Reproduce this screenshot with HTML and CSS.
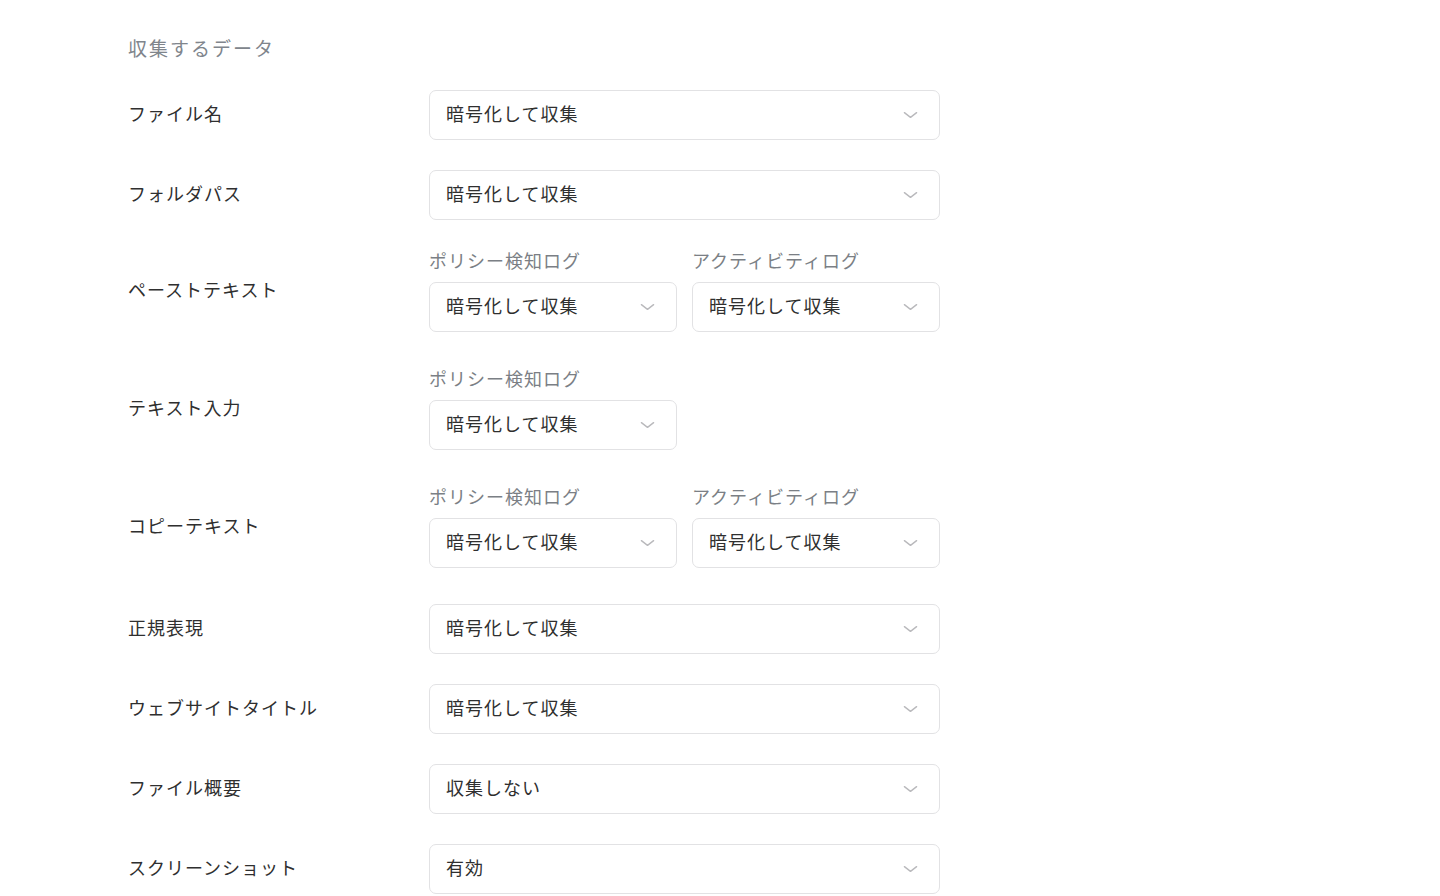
FILE: index.html
```html
<!DOCTYPE html>
<html lang="ja">
<head>
<meta charset="utf-8">
<title>収集するデータ</title>
<link rel="stylesheet" href="styles.css">
</head>
<body>
<main class="page">
  <h2 class="section-title">収集するデータ</h2>
  <div class="form">
    <div class="row">
      <div class="label">ファイル名</div>
      <div class="field">
        <div class="select"><span class="value">暗号化して収集</span><svg class="chev" viewBox="0 0 16 8"><path d="M1.5 1.5 L8 6.5 L14.5 1.5"/></svg></div>
      </div>
    </div>
    <div class="row">
      <div class="label">フォルダパス</div>
      <div class="field">
        <div class="select"><span class="value">暗号化して収集</span><svg class="chev" viewBox="0 0 16 8"><path d="M1.5 1.5 L8 6.5 L14.5 1.5"/></svg></div>
      </div>
    </div>
    <div class="row">
      <div class="label">ペーストテキスト</div>
      <div class="field field--split">
        <div class="sub">
          <div class="sublabel">ポリシー検知ログ</div>
          <div class="select"><span class="value">暗号化して収集</span><svg class="chev" viewBox="0 0 16 8"><path d="M1.5 1.5 L8 6.5 L14.5 1.5"/></svg></div>
        </div>
        <div class="sub">
          <div class="sublabel">アクティビティログ</div>
          <div class="select"><span class="value">暗号化して収集</span><svg class="chev" viewBox="0 0 16 8"><path d="M1.5 1.5 L8 6.5 L14.5 1.5"/></svg></div>
        </div>
      </div>
    </div>
    <div class="row row--spaced">
      <div class="label">テキスト入力</div>
      <div class="field field--split">
        <div class="sub">
          <div class="sublabel">ポリシー検知ログ</div>
          <div class="select"><span class="value">暗号化して収集</span><svg class="chev" viewBox="0 0 16 8"><path d="M1.5 1.5 L8 6.5 L14.5 1.5"/></svg></div>
        </div>
      </div>
    </div>
    <div class="row row--spaced">
      <div class="label">コピーテキスト</div>
      <div class="field field--split">
        <div class="sub">
          <div class="sublabel">ポリシー検知ログ</div>
          <div class="select"><span class="value">暗号化して収集</span><svg class="chev" viewBox="0 0 16 8"><path d="M1.5 1.5 L8 6.5 L14.5 1.5"/></svg></div>
        </div>
        <div class="sub">
          <div class="sublabel">アクティビティログ</div>
          <div class="select"><span class="value">暗号化して収集</span><svg class="chev" viewBox="0 0 16 8"><path d="M1.5 1.5 L8 6.5 L14.5 1.5"/></svg></div>
        </div>
      </div>
    </div>
    <div class="row row--spaced">
      <div class="label">正規表現</div>
      <div class="field">
        <div class="select"><span class="value">暗号化して収集</span><svg class="chev" viewBox="0 0 16 8"><path d="M1.5 1.5 L8 6.5 L14.5 1.5"/></svg></div>
      </div>
    </div>
    <div class="row">
      <div class="label">ウェブサイトタイトル</div>
      <div class="field">
        <div class="select"><span class="value">暗号化して収集</span><svg class="chev" viewBox="0 0 16 8"><path d="M1.5 1.5 L8 6.5 L14.5 1.5"/></svg></div>
      </div>
    </div>
    <div class="row">
      <div class="label">ファイル概要</div>
      <div class="field">
        <div class="select"><span class="value">収集しない</span><svg class="chev" viewBox="0 0 16 8"><path d="M1.5 1.5 L8 6.5 L14.5 1.5"/></svg></div>
      </div>
    </div>
    <div class="row">
      <div class="label">スクリーンショット</div>
      <div class="field">
        <div class="select"><span class="value">有効</span><svg class="chev" viewBox="0 0 16 8"><path d="M1.5 1.5 L8 6.5 L14.5 1.5"/></svg></div>
      </div>
    </div>
  </div>
</main>
</body>
</html>
```

FILE: styles.css
```css
* { box-sizing: border-box; }

html, body {
  margin: 0;
  padding: 0;
  background: #ffffff;
}

body {
  font-family: "Noto Sans CJK JP", "Noto Sans", "Liberation Sans", sans-serif;
  color: #2f2f2f;
  font-size: 18px;
  letter-spacing: 1px;
}

.page {
  padding: 34px 0 40px 128px;
}

.section-title {
  margin: 0 0 28px 0;
  font-size: 19px;
  line-height: 28px;
  font-weight: 400;
  letter-spacing: 2px;
  color: #80858c;
}

.form {
  display: flex;
  flex-direction: column;
  gap: 30px;
}

.row {
  display: grid;
  grid-template-columns: 301px 511px;
  align-items: center;
}

.row--spaced {
  margin-top: 6px;
}

.label {
  font-size: 18px;
  line-height: 28px;
  padding-bottom: 4px;
  color: #2f2f2f;
}

.field--split {
  display: grid;
  grid-template-columns: 248px 248px;
  column-gap: 15px;
}

.sublabel {
  font-size: 18px;
  line-height: 20px;
  margin-bottom: 12px;
  color: #7b7f85;
}

.select {
  height: 50px;
  border: 1px solid #e2e2e4;
  border-radius: 7px;
  background: #ffffff;
  display: flex;
  align-items: center;
  justify-content: space-between;
  padding: 0 21px 4px 16px;
}

.value {
  font-size: 18px;
  line-height: 24px;
  color: #2f2f2f;
}

.chev {
  width: 15px;
  height: 8px;
  margin-top: 3px;
  fill: none;
  stroke: #b9b9bc;
  stroke-width: 1.5;
  stroke-linecap: round;
  stroke-linejoin: round;
}
```
